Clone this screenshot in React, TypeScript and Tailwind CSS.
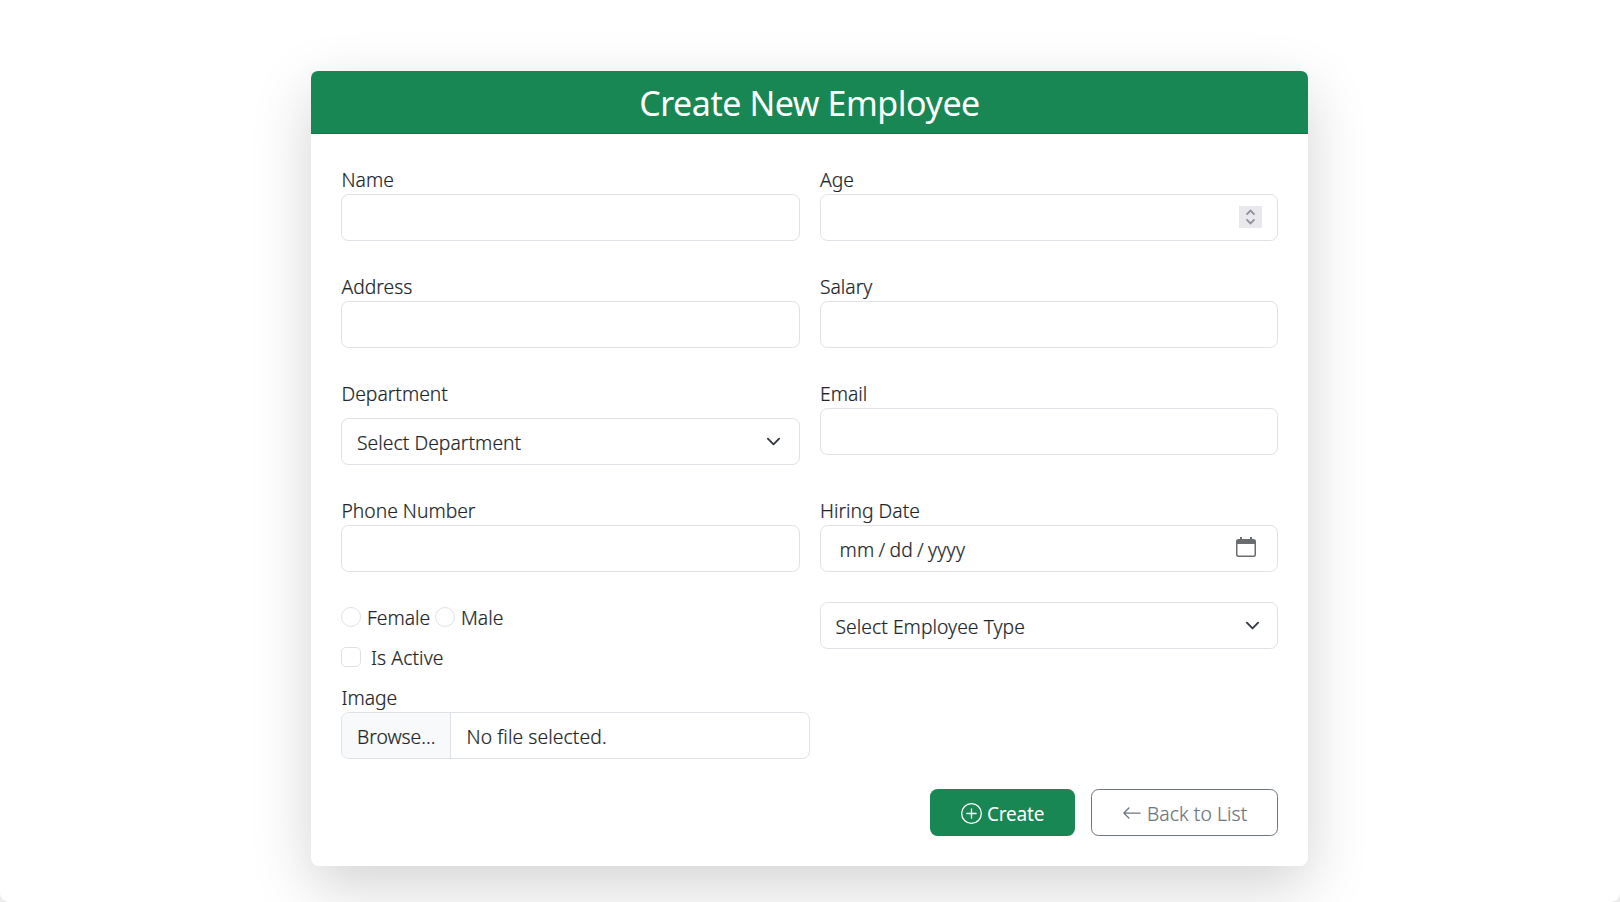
import type { ReactNode } from "react";
import { BsArrowLeft, BsPlusCircle } from "react-icons/bs";

const box = "flex h-[47px] w-full items-center rounded-[7.5px] border border-[#dee2e6] bg-white";

function Label({ children }: { children: ReactNode }) {
  return (
    <div className="flex h-[30px] items-center pt-px pl-[0.5px]">
      <span className="whitespace-nowrap">{children}</span>
    </div>
  );
}

function Field({ label, children }: { label: string; children?: ReactNode }) {
  return (
    <div>
      <Label>{label}</Label>
      <div className={box}>{children}</div>
    </div>
  );
}

function Select({ label }: { label: string }) {
  return (
    <div className={box + " justify-between pl-[15px] pr-[17.5px]"}>
      <span className="pt-0.5 tracking-[0.05px]">{label}</span>
      <svg width="15" height="15" viewBox="0 0 16 16" fill="none" stroke="#343a40" strokeWidth="2" strokeLinecap="round" strokeLinejoin="round">
        <path d="m2 5 6 6 6-6" />
      </svg>
    </div>
  );
}

export default function App() {
  return (
    <div className="h-[902px] overflow-hidden bg-[#ececec] font-['Noto_Sans',sans-serif] text-[19.3px] leading-[30px] font-light text-[#212529] [-webkit-text-stroke:0.2px]">
      <div className="h-full overflow-hidden rounded-b-[9px] bg-white pl-[311px] pt-[71px]">
        <main className="h-[795px] w-[997px] rounded-[8px] bg-white shadow-[0_20px_60px_rgba(0,0,0,0.175)]">
          <header className="flex h-[63px] items-center justify-center rounded-t-[7px] border-b border-[#157347] bg-[#198754] pt-px">
            <h1 className="text-[34px] leading-[42px] font-normal tracking-[-0.45px] text-white [-webkit-text-stroke:0px]">Create New Employee</h1>
          </header>

          <form className="px-[30px] pt-[30px]">
            <div className="grid grid-cols-2 gap-x-5 gap-y-[30px]">
              <Field label="Name" />
              <Field label="Age">
                <div className="mb-0.5 ml-auto mr-[15px] flex h-[22px] w-[23px] items-center justify-center bg-[#e9e9ed]">
                  <svg width="11" height="16" viewBox="0 0 11 16" fill="none" stroke="#8f8f9d" strokeWidth="1.8">
                    <path d="m1.5 5.6 4-4 4 4M1.5 10.4l4 4 4-4" />
                  </svg>
                </div>
              </Field>
              <Field label="Address" />
              <Field label="Salary" />
              <div>
                <Label>Department</Label>
                <div className="pt-2.5">
                  <Select label="Select Department" />
                </div>
              </div>
              <Field label="Email" />
              <Field label="Phone Number" />
              <Field label="Hiring Date">
                <div className="flex w-full items-center justify-between pl-[19px] pr-[21px]">
                  <div className="flex gap-1 pt-0.5 tracking-[0.25px]">
                    <span>mm</span>
                    <span>/</span>
                    <span>dd</span>
                    <span>/</span>
                    <span>yyyy</span>
                  </div>
                  <svg className="mb-[3px]" width="20" height="20" viewBox="0 0 20 20" fill="#6a6d70">
                    <path fillRule="evenodd" d="M4 0h2v2h8V0h2v2h1.500A2.500 2.500 0 0 1 20 4.500v13a2.500 2.500 0 0 1-2.500 2.500h-15A2.500 2.500 0 0 1 0 17.500v-13A2.500 2.500 0 0 1 2.500 2H4zM1.500 7v10.500a1 1 0 0 0 1 1h15a1 1 0 0 0 1-1V7z" />
                  </svg>
                </div>
              </Field>
            </div>

            <div className="mt-[30px] grid h-[80px] grid-cols-2 gap-x-5">
              <div>
                <div className="flex h-[30px] items-center">
                  <span className="h-5 w-5 rounded-full border border-[#dee2e6]" />
                  <span className="ml-[6px] w-[68px] pt-px">Female</span>
                  <span className="h-5 w-5 rounded-full border border-[#dee2e6]" />
                  <span className="ml-[6px] pt-px">Male</span>
                </div>
                <div className="mt-2.5 flex h-[30px] items-center">
                  <span className="h-5 w-5 rounded-[5px] border border-[#dee2e6]" />
                  <span className="ml-2.5 pt-px tracking-[0.1px]">Is Active</span>
                </div>
              </div>
              <Select label="Select Employee Type" />
            </div>

            <Label>Image</Label>
            <div className="flex h-[47px] w-[469px] overflow-hidden rounded-[7.5px] border border-[#dee2e6]">
              <div className="flex w-[109px] items-center border-r border-[#dee2e6] bg-[#f8f9fa] pl-[15px] pt-0.5">
                <span>Browse...</span>
              </div>
              <div className="flex items-center pl-[15.5px] pt-0.5">
                <span className="tracking-[0.1px]">No file selected.</span>
              </div>
            </div>

            <div className="mt-[30px] flex justify-end gap-4">
              <button type="button" className="flex h-[47px] w-[145px] items-center rounded-[7.5px] bg-[#198754] pl-[31px] text-[19px] font-normal text-white [-webkit-text-stroke:0px]">
                <BsPlusCircle className="mt-px h-[21px] w-[21px]" strokeWidth="0" />
                <span className="ml-[5px] pt-[3px] tracking-[-0.2px]">Create</span>
              </button>
              <button type="button" className="flex h-[47px] w-[187px] items-center rounded-[7.5px] border border-[#6c757d] pl-[30px] text-[#6c757d]">
                <BsArrowLeft className="h-5 w-5" />
                <span className="ml-[5px] whitespace-nowrap pt-0.5 tracking-[0.1px]">Back to List</span>
              </button>
            </div>
          </form>
        </main>
      </div>
    </div>
  );
}
